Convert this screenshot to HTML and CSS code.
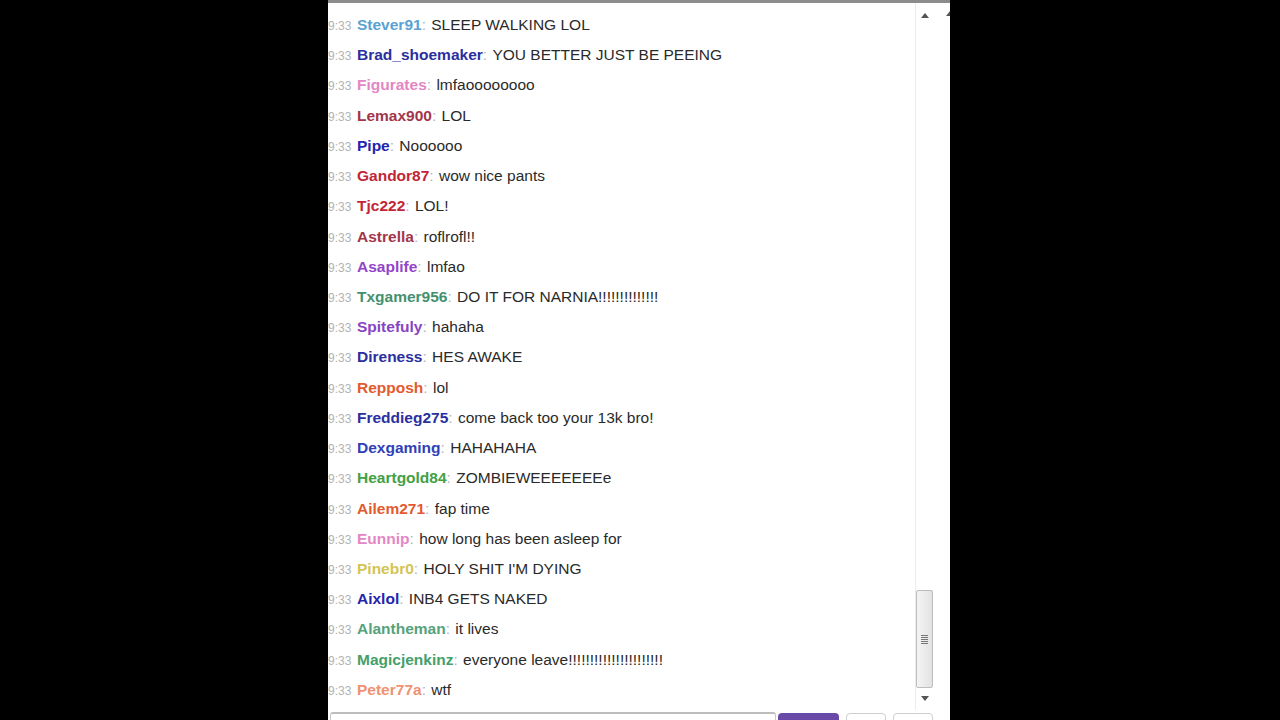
FILE: index.html
```html
<!DOCTYPE html>
<html>
<head>
<meta charset="utf-8">
<link rel="stylesheet" href="styles.css">
</head>
<body>
<div class="stage">
  <div class="panel">
    <div class="topbar"></div>
    <div class="chat">
      <ul class="messages">
        <li class="line"><span class="time">9:33</span><span class="name c-stever">Stever91</span><span class="colon">:</span> <span class="msg">SLEEP WALKING LOL</span></li>
        <li class="line"><span class="time">9:33</span><span class="name c-navy">Brad_shoemaker</span><span class="colon">:</span> <span class="msg">YOU BETTER JUST BE PEEING</span></li>
        <li class="line"><span class="time">9:33</span><span class="name c-pink">Figurates</span><span class="colon">:</span> <span class="msg">lmfaoooooooo</span></li>
        <li class="line"><span class="time">9:33</span><span class="name c-maroon">Lemax900</span><span class="colon">:</span> <span class="msg">LOL</span></li>
        <li class="line"><span class="time">9:33</span><span class="name c-blue">Pipe</span><span class="colon">:</span> <span class="msg">Noooooo</span></li>
        <li class="line"><span class="time">9:33</span><span class="name c-red">Gandor87</span><span class="colon">:</span> <span class="msg">wow nice pants</span></li>
        <li class="line"><span class="time">9:33</span><span class="name c-red">Tjc222</span><span class="colon">:</span> <span class="msg">LOL!</span></li>
        <li class="line"><span class="time">9:33</span><span class="name c-maroon">Astrella</span><span class="colon">:</span> <span class="msg">roflrofl!!</span></li>
        <li class="line"><span class="time">9:33</span><span class="name c-purple">Asaplife</span><span class="colon">:</span> <span class="msg">lmfao</span></li>
        <li class="line"><span class="time">9:33</span><span class="name c-teal">Txgamer956</span><span class="colon">:</span> <span class="msg">DO IT FOR NARNIA!!!!!!!!!!!!!!</span></li>
        <li class="line"><span class="time">9:33</span><span class="name c-violet">Spitefuly</span><span class="colon">:</span> <span class="msg">hahaha</span></li>
        <li class="line"><span class="time">9:33</span><span class="name c-navy">Direness</span><span class="colon">:</span> <span class="msg">HES AWAKE</span></li>
        <li class="line"><span class="time">9:33</span><span class="name c-orange">Repposh</span><span class="colon">:</span> <span class="msg">lol</span></li>
        <li class="line"><span class="time">9:33</span><span class="name c-navy">Freddieg275</span><span class="colon">:</span> <span class="msg">come back too your 13k bro!</span></li>
        <li class="line"><span class="time">9:33</span><span class="name c-royal">Dexgaming</span><span class="colon">:</span> <span class="msg">HAHAHAHA</span></li>
        <li class="line"><span class="time">9:33</span><span class="name c-green">Heartgold84</span><span class="colon">:</span> <span class="msg">ZOMBIEWEEEEEEEe</span></li>
        <li class="line"><span class="time">9:33</span><span class="name c-orange">Ailem271</span><span class="colon">:</span> <span class="msg">fap time</span></li>
        <li class="line"><span class="time">9:33</span><span class="name c-pink">Eunnip</span><span class="colon">:</span> <span class="msg">how long has been asleep for</span></li>
        <li class="line"><span class="time">9:33</span><span class="name c-yellow">Pinebr0</span><span class="colon">:</span> <span class="msg">HOLY SHIT I'M DYING</span></li>
        <li class="line"><span class="time">9:33</span><span class="name c-blue">Aixlol</span><span class="colon">:</span> <span class="msg">INB4 GETS NAKED</span></li>
        <li class="line"><span class="time">9:33</span><span class="name c-sea">Alantheman</span><span class="colon">:</span> <span class="msg">it lives</span></li>
        <li class="line"><span class="time">9:33</span><span class="name c-mint">Magicjenkinz</span><span class="colon">:</span> <span class="msg">everyone leave!!!!!!!!!!!!!!!!!!!!!!</span></li>
        <li class="line"><span class="time">9:33</span><span class="name c-salmon">Peter77a</span><span class="colon">:</span> <span class="msg">wtf</span></li>
      </ul>
      <div class="scrollbar">
        <span class="arrow up"></span>
        <div class="thumb"><span class="grip"></span></div>
        <span class="arrow down"></span>
      </div>
      <div class="outer-scroll">
        <span class="arrow up"></span>
      </div>
    </div>
    <div class="controls">
      <div class="input"></div>
      <div class="btn-primary"></div>
      <div class="btn"></div>
      <div class="btn"></div>
    </div>
  </div>
</div>
</body>
</html>
```
FILE: styles.css
```css
* { box-sizing: border-box; }
html, body { margin: 0; padding: 0; background: #000; }
body { width: 1280px; height: 720px; overflow: hidden; font-family: "Liberation Sans", Arial, sans-serif; }

.stage { display: flex; height: 720px; padding-left: 328px; }

.panel {
  width: 622px;
  height: 720px;
  background: #fff;
  display: flex;
  flex-direction: column;
  overflow: hidden;
}

.topbar { height: 3px; background: #8c8c8c; flex: none; }

.chat { display: flex; height: 707px; flex: none; }

.messages {
  list-style: none;
  margin: 0;
  padding: 7px 0 0 0;
  flex: 1;
  overflow: hidden;
}

.line {
  height: 30.23px;
  line-height: 30.23px;
  font-size: 15.5px;
  color: #2b2b2b;
  white-space: nowrap;
}

.time {
  display: inline-block;
  width: 29px;
  font-size: 12px;
  color: #b3b3b3;
}

.name { font-weight: bold; }
.colon { color: #b5b5b5; }
.msg { color: #2a2a2a; margin-left: 1px; }

.c-stever { color: #5aa2d2; }
.c-navy { color: #2b2f9e; }
.c-pink { color: #e387c4; }
.c-maroon { color: #a3354a; }
.c-blue { color: #2424ad; }
.c-red { color: #c22636; }
.c-purple { color: #9444c8; }
.c-teal { color: #44906e; }
.c-violet { color: #8744c4; }
.c-orange { color: #e35a2e; }
.c-royal { color: #3040b8; }
.c-green { color: #43a043; }
.c-yellow { color: #d3c454; }
.c-sea { color: #55a27c; }
.c-mint { color: #44a06a; }
.c-salmon { color: #f09272; }

.scrollbar {
  width: 18px;
  flex: none;
  border-left: 1px solid #ececec;
  display: flex;
  flex-direction: column;
  align-items: center;
  padding: 10px 0 9px;
}

.arrow { display: block; width: 0; height: 0; border-left: 4px solid transparent; border-right: 4px solid transparent; }
.arrow.up { border-bottom: 5px solid #555; }
.arrow.down { border-top: 5px solid #555; }

.thumb {
  margin-top: auto;
  margin-bottom: 8px;
  width: 17px;
  height: 98px;
  border: 1px solid #bdbdbd;
  border-radius: 2px;
  background: linear-gradient(to right, #f4f4f4, #e2e2e2);
  display: flex;
  align-items: center;
  justify-content: center;
}

.grip {
  width: 7px;
  height: 9px;
  background: repeating-linear-gradient(to bottom, #777 0 1px, transparent 1px 2px);
}

.outer-scroll {
  width: 17px;
  flex: none;
  padding: 8px 0 0 13px;
}

.controls {
  display: flex;
  padding: 2px 0 0 2px;
  height: 10px;
  align-items: flex-start;
}

.input {
  width: 446px;
  height: 20px;
  border: 1px solid #c8c8c8;
  border-top: 2px solid #bdbdbd;
  border-radius: 3px;
}

.btn-primary {
  width: 61px;
  height: 20px;
  margin: 1px 0 0 2px;
  background: #6a4aa8;
  border-radius: 4px;
}

.btn {
  width: 40px;
  height: 20px;
  margin: 1px 0 0 7px;
  border: 1px solid #cfcfcf;
  border-radius: 4px;
  background: #fff;
}
```
